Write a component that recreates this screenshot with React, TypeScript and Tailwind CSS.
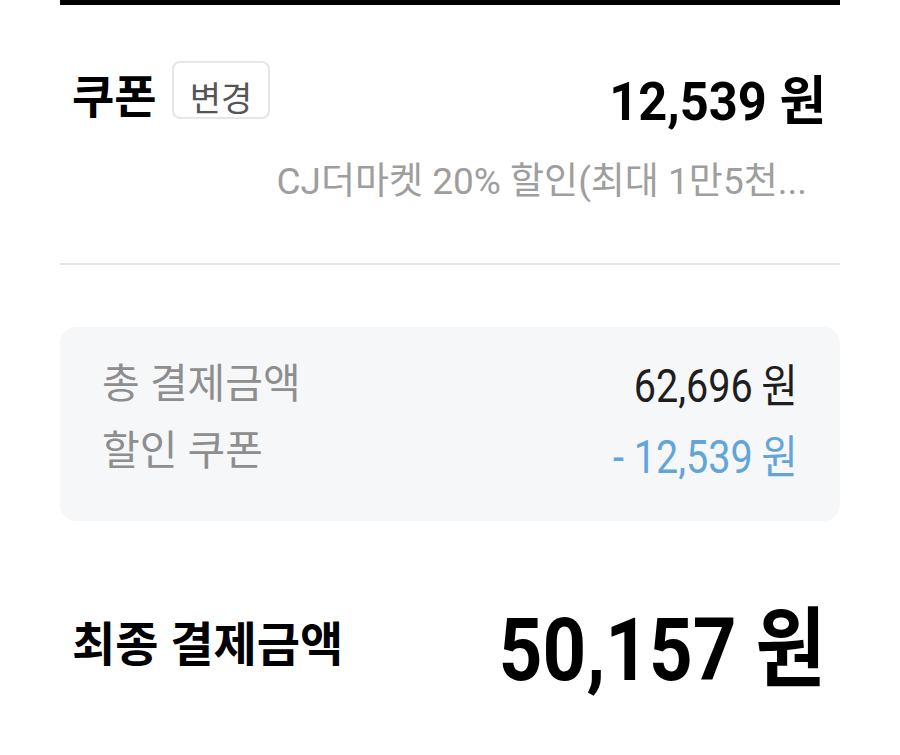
import React from 'react';

const font = { fontFamily: 'Roboto, "Noto Sans CJK KR", sans-serif' };

const App: React.FC = () => {
  return (
    <div className="min-h-screen w-full bg-white" style={font}>
      <div className="mx-auto w-[780px]">
        {/* Top bar */}
        <div className="h-[5px] bg-black" />

        {/* Coupon */}
        <div className="pt-[56px] pb-[63px] border-b-2 border-[#e6e6e6]">
          <div className="flex items-start justify-between h-[67px] pl-[12px] pr-[14px]">
            <div className="flex items-start gap-[15px]">
              <span className="mt-[13px] text-[46px] font-bold text-black leading-none">쿠폰</span>
              <button className="h-[58px] px-[16px] pt-[17px] rounded-[8px] border-2 border-[#e6e6e6] bg-white text-[34px] text-[#555] leading-none">
                변경
              </button>
            </div>
            <span className="mt-[15px] inline-block origin-right scale-x-[0.955] text-[53px] font-bold text-black leading-none whitespace-nowrap">
              12,539 원
            </span>
          </div>
          <div className="mt-[35px] pr-[33px] text-right text-[37px] text-[#9e9e9e] leading-none">
            CJ더마켓 20% 할인(최대 1만5천...
          </div>
        </div>

        {/* Summary box */}
        <div className="mt-[62px] h-[194px] rounded-[16px] bg-[#f6f7f9] px-[42px] pt-[36px]">
          <div className="flex items-start justify-between">
            <span className="mt-[1px] text-[41px] text-[#8e8e8e] leading-none">총 결제금액</span>
            <span className="flex origin-right scale-x-[0.86] text-[46px] text-[#1e1e1e] leading-none whitespace-nowrap">
              <span>62,696</span>
              <span className="ml-[10px]">원</span>
            </span>
          </div>
          <div className="mt-[22px] flex items-start justify-between">
            <span className="text-[41px] text-[#8e8e8e] leading-none">할인 쿠폰</span>
            <span className="mt-[3px] flex origin-right scale-x-[0.86] text-[46px] text-[#62a5d9] leading-none whitespace-nowrap">
              <span>- 12,539</span>
              <span className="ml-[10px]">원</span>
            </span>
          </div>
        </div>

        {/* Final */}
        <div className="mt-[86px] flex items-start justify-between pl-[12px] pr-[14px]">
          <span className="mt-[14px] text-[47px] font-bold text-black leading-none">최종 결제금액</span>
          <span className="inline-block origin-right scale-x-[0.877] text-[87px] font-bold text-black leading-none whitespace-nowrap">
            50,157 원
          </span>
        </div>
      </div>
    </div>
  );
};

export default App;
